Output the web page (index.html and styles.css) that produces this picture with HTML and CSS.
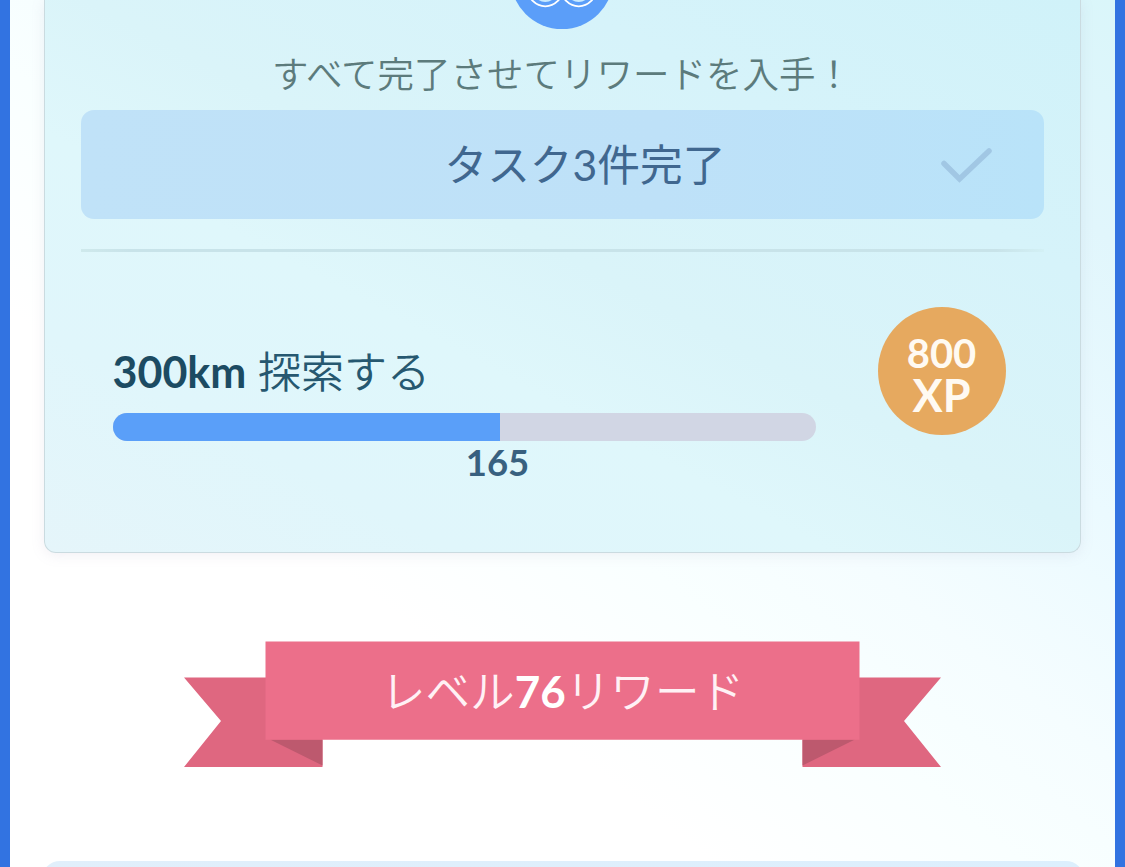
FILE: index.html
```html
<!DOCTYPE html>
<html lang="ja">
<head>
<meta charset="utf-8">
<title>レベルリワード</title>
<link rel="stylesheet" href="styles.css">
</head>
<body>
<main class="screen">
  <section class="card">
    <svg class="emblem" width="108" height="30" viewBox="0 0 108 30">
      <circle cx="54" cy="-22.4" r="51.5" fill="#5b9ef9"/>
      <g fill="none" stroke="#fff" stroke-width="1.8">
        <circle cx="37.3" cy="-11" r="17.3"/>
        <circle cx="70.7" cy="-11" r="17.3"/>
      </g>
      <circle cx="37.3" cy="-10" r="12" fill="#c8eaff"/>
      <circle cx="70.7" cy="-10" r="12" fill="#c8eaff"/>
    </svg>
    <p class="hint">すべて完了させてリワードを入手！</p>
    <div class="task-done">
      <span class="task-label">タスク3件完了</span>
      <svg class="check" width="54" height="40" viewBox="0 0 54 40">
        <path d="M4 18.5 L19.5 34 L49 6" fill="none" stroke="#a1c7e4" stroke-width="5.5" stroke-linecap="round"/>
      </svg>
    </div>
    <div class="divider"></div>
    <div class="quest">
      <div class="quest-main">
        <div class="quest-title"><b>300km</b> 探索する</div>
        <div class="bar"><div class="bar-fill" style="width:55.1%"></div></div>
        <div class="bar-row"><span class="bar-value">165</span></div>
      </div>
      <div class="xp"><span class="xp-num">800</span><span class="xp-unit">XP</span></div>
    </div>
  </section>
  <div class="ribbon">
    <svg class="ribbon-art" width="757" height="127" viewBox="0 0 757 127">
      <path d="M0 36.5H138.5V126H0L37 80Z M757 36.5H618.5V126H757L720 80Z" fill="#df6780"/>
      <path d="M86 98.5H138.5V124.5Z M671 98.5H618.5V124.5Z" fill="#bd596e"/>
      <path d="M81.5 .5H675.5V98.7H81.5Z" fill="#ec6f8a"/>
    </svg>
    <h2 class="ribbon-text">レベル<b>76</b>リワード</h2>
  </div>
  <section class="next-card"></section>
</main>
</body>
</html>
```

FILE: styles.css
```css
* { box-sizing: border-box; }
body {
  margin: 0;
  height: 867px;
  overflow: hidden;
  font-family: Lato, "Noto Sans CJK JP", sans-serif;
}
.screen {
  height: 867px;
  overflow: hidden;
  display: flex;
  flex-direction: column;
  align-items: center;
  border: solid #3273e1;
  border-width: 0 10px;
  background: linear-gradient(to bottom left, #daf6fa 0%, #e1f6fc 14%, #ebfaff 30%, #f5fdff 44%, #f9ffff 54%, #fff 68%);
}
.card {
  flex: none;
  width: 1037px;
  height: 553px;
  margin-right: 1px;
  padding: 0 36px;
  display: flex;
  flex-direction: column;
  align-items: center;
  border: 1.5px solid #cadbe0;
  border-top: 0;
  border-radius: 0 0 12px 12px;
  box-shadow: 0 2px 14px rgba(150, 130, 170, .13);
  background: linear-gradient(to bottom left, #d0f2f9 0%, #d6f3fa 25%, #daf4f9 48%, #dff7fb 62%, #e0f6fb 80%, #e5f5fa 100%);
}
.emblem { display: block; flex: none; }
.hint {
  margin: 16px 0 0;
  height: 64px;
  line-height: 56px;
  font-size: 36.5px;
  font-weight: 350;
  white-space: nowrap;
  color: #5c7b7c;
}
.task-done {
  width: 963px;
  height: 109px;
  flex: none;
  padding: 0 50px 0 364px;
  display: flex;
  align-items: center;
  justify-content: space-between;
  border-radius: 13px;
  background: linear-gradient(90deg, #c0e2f8, #bee1f8 60%, #b9e3f9);
}
.task-label {
  font-size: 42.7px;
  line-height: 60px;
  padding-top: 1px;
  color: #40678f;
  white-space: nowrap;
}
.divider {
  flex: none;
  width: 963px;
  height: 3px;
  margin-top: 30px;
  background: linear-gradient(90deg, #cfe9ec, #c8e3e9 5%, #c8e3e9 95%, #d3f0f5);
}
.quest {
  width: 963px;
  margin-top: 55px;
  padding: 0 38px 0 32px;
  display: flex;
  justify-content: space-between;
}
.quest-main { width: 703px; padding-top: 35px; }
.quest-title {
  height: 71px;
  line-height: 60px;
  font-size: 43px;
  font-weight: 350;
  color: #265870;
  white-space: nowrap;
}
.quest-title b { font-weight: 700; color: #1c4b62; }
.bar {
  height: 28px;
  border-radius: 14px;
  overflow: hidden;
  background: #d1d6e4;
}
.bar-fill { height: 100%; background: #5a9ff9; }
.bar-row { width: 770px; text-align: center; }
.bar-value {
  font-size: 36.5px;
  line-height: 43px;
  font-weight: 700;
  color: #38607f;
}
.xp {
  width: 128px;
  height: 128px;
  border-radius: 50%;
  background: #e6a95f;
  color: #fffaf2;
  display: flex;
  flex-direction: column;
  align-items: center;
  padding-top: 26px;
  font-weight: 700;
}
.xp-num { font-size: 40px; line-height: 40px; }
.xp-unit { font-size: 45px; line-height: 44px; }
.ribbon {
  flex: none;
  margin-top: 88px;
  display: grid;
}
.ribbon-art, .ribbon-text { grid-area: 1 / 1; display: block; }
.ribbon-text {
  margin: 0;
  height: 99px;
  line-height: 99px;
  text-align: center;
  font-size: 44.6px;
  font-weight: 350;
  color: #fff1f5;
}
.ribbon-text b { font-size: 44px; font-weight: 700; color: #fff; }
.next-card {
  flex: none;
  width: 1042px;
  height: 60px;
  margin-top: 93px;
  border-radius: 18px 18px 0 0;
  background: linear-gradient(90deg, #e1effb, #dceffd);
}
```
